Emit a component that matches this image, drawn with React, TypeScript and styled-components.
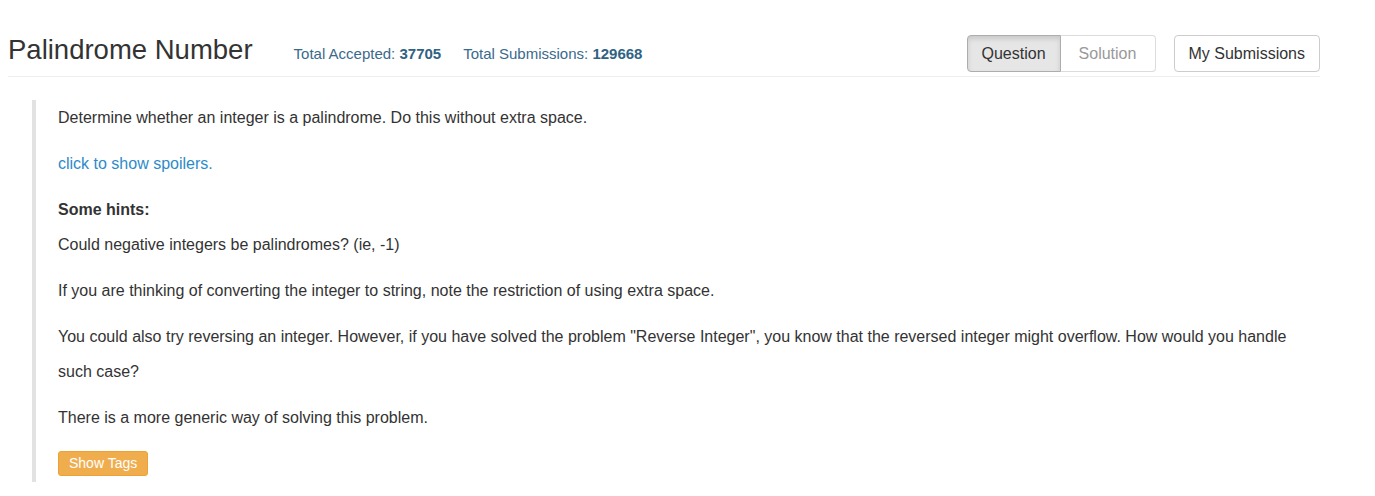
import React from "react";
import styled, { createGlobalStyle } from "styled-components";

const Global = createGlobalStyle`
  html, body { margin: 0; padding: 0; background: #fff; }
  body {
    font-family: "Liberation Sans", Arial, sans-serif;
    color: #333;
  }
`;

const Page = styled.div`
  width: 1312px;
  margin-left: 8px;
`;

const Header = styled.div`
  display: flex;
  align-items: baseline;
  padding-top: 35px;
  padding-bottom: 4px;
  border-bottom: 1px solid #eee;
`;

const Title = styled.h3`
  margin: 0;
  font-size: 27.5px;
  line-height: 30px;
  font-weight: 400;
  color: #333;
`;

const Stats = styled.div`
  display: flex;
  gap: 22px;
  margin-left: 41px;
  font-size: 15px;
  color: #3a6a8c;
`;

const Stat = styled.span`
  b { font-weight: 700; color: #2f6283; }
`;

const Spacer = styled.div`
  flex: 1;
`;

const BtnGroup = styled.div`
  display: inline-flex;
  align-items: baseline;
`;

const Btn = styled.button<{ $active?: boolean; $muted?: boolean; $pos?: "left" | "right" | "solo"; $w?: number }>`
  font-family: inherit;
  font-size: 16px;
  line-height: 23px;
  padding: 6px 14px;
  ${(p) => (p.$w ? `width: ${p.$w}px;` : "")}
  border: 1px solid ${(p) => (p.$active ? "#adadad" : p.$muted ? "#dcdcdc" : "#ccc")};
  background: ${(p) => (p.$active ? "#e6e6e6" : "#fff")};
  color: ${(p) => (p.$muted ? "#999" : "#333")};
  box-shadow: ${(p) => (p.$active ? "inset 0 3px 5px rgba(0,0,0,0.125)" : "none")};
  border-radius: ${(p) =>
    p.$pos === "left" ? "4px 0 0 4px" : p.$pos === "right" ? "0 4px 4px 0" : "4px"};
  ${(p) => (p.$pos === "right" ? "border-left: none;" : "")}
  cursor: pointer;
  text-align: center;
`;

const SoloWrap = styled.div`
  margin-left: 18px;
`;

const Quote = styled.div`
  margin: 23px 0 0 24px;
  padding: 0 10px 6px 22px;
  border-left: 4px solid #e2e2e2;
  font-size: 16px;
  line-height: 35px;
`;

const P = styled.p`
  margin: 0 0 11px;
`;

const Link = styled.a`
  color: #2d8bc9;
  text-decoration: none;
  cursor: pointer;
`;

const Hints = styled.div`
  font-weight: 700;
`;

const TagRow = styled.div`
  padding-top: 5px;
  line-height: normal;
`;

const TagBtn = styled.button`
  font-family: inherit;
  font-size: 14px;
  line-height: 17px;
  padding: 3px 10px;
  border: 1px solid #eea236;
  border-radius: 3px;
  background: #f0ad4e;
  color: #fff;
  display: block;
`;

export default function App() {
  return (
    <>
      <Global />
      <Page>
        <Header>
          <Title>Palindrome Number</Title>
          <Stats>
            <Stat>
              Total Accepted: <b>37705</b>
            </Stat>
            <Stat>
              Total Submissions: <b>129668</b>
            </Stat>
          </Stats>
          <Spacer />
          <BtnGroup>
            <Btn $active $pos="left" $w={94}>Question</Btn>
            <Btn $muted $pos="right" $w={95}>Solution</Btn>
          </BtnGroup>
          <SoloWrap>
            <Btn $pos="solo">My Submissions</Btn>
          </SoloWrap>
        </Header>
        <Quote>
          <P>Determine whether an integer is a palindrome. Do this without extra space.</P>
          <P>
            <Link>click to show spoilers.</Link>
          </P>
          <Hints>Some hints:</Hints>
          <P>Could negative integers be palindromes? (ie, -1)</P>
          <P>If you are thinking of converting the integer to string, note the restriction of using extra space.</P>
          <P>
            You could also try reversing an integer. However, if you have solved the problem "Reverse Integer", you
            know that the reversed integer might overflow. How would you handle such case?
          </P>
          <P>There is a more generic way of solving this problem.</P>
          <TagRow>
            <TagBtn>Show Tags</TagBtn>
          </TagRow>
        </Quote>
      </Page>
    </>
  );
}
